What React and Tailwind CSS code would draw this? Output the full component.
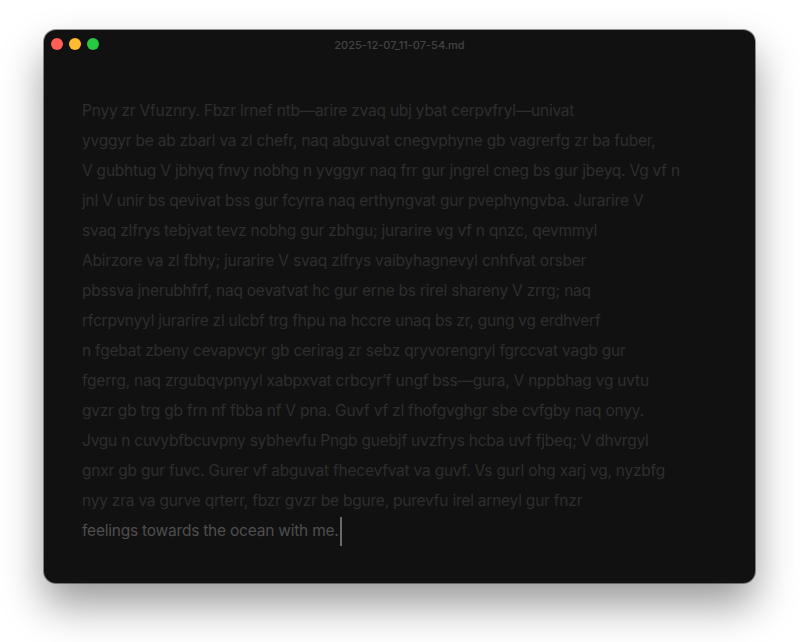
import React from "react";

const lines = [
  "Pnyy zr Vfuznry. Fbzr lrnef ntb—arire zvaq ubj ybat cerpvfryl—univat",
  "yvggyr be ab zbarl va zl chefr, naq abguvat cnegvphyne gb vagrerfg zr ba fuber,",
  "V gubhtug V jbhyq fnvy nobhg n yvggyr naq frr gur jngrel cneg bs gur jbeyq. Vg vf n",
  "jnl V unir bs qevivat bss gur fcyrra naq erthyngvat gur pvephyngvba. Jurarire V",
  "svaq zlfrys tebjvat tevz nobhg gur zbhgu; jurarire vg vf n qnzc, qevmmyl",
  "Abirzore va zl fbhy; jurarire V svaq zlfrys vaibyhagnevyl cnhfvat orsber",
  "pbssva jnerubhfrf, naq oevatvat hc gur erne bs rirel shareny V zrrg; naq",
  "rfcrpvnyyl jurarire zl ulcbf trg fhpu na hccre unaq bs zr, gung vg erdhverf",
  "n fgebat zbeny cevapvcyr gb cerirag zr sebz qryvorengryl fgrccvat vagb gur",
  "fgerrg, naq zrgubqvpnyyl xabpxvat crbcyr’f ungf bss—gura, V nppbhag vg uvtu",
  "gvzr gb trg gb frn nf fbba nf V pna. Guvf vf zl fhofgvghgr sbe cvfgby naq onyy.",
  "Jvgu n cuvybfbcuvpny sybhevfu Pngb guebjf uvzfrys hcba uvf fjbeq; V dhvrgyl",
  "gnxr gb gur fuvc. Gurer vf abguvat fhecevfvat va guvf. Vs gurl ohg xarj vg, nyzbfg",
  "nyy zra va gurve qrterr, fbzr gvzr be bgure, purevfu irel arneyl gur fnzr",
];

export default function App() {
  return (
    <div className="w-[800px] h-[642px] bg-white pt-[30px] pl-[44px]" style={{ fontFamily: "Inter, 'Noto Sans', sans-serif" }}>
      <div className="w-[711px] h-[553px] rounded-[12px] bg-[#111111] ring-1 ring-black/40 shadow-[0_22px_42px_rgba(0,0,0,0.4)] flex flex-col overflow-hidden">
        <div className="relative h-[28px] flex items-center px-[7px]">
          <div className="flex gap-[6px]">
            <span className="w-[12px] h-[12px] rounded-full bg-[#ff5f57]" />
            <span className="w-[12px] h-[12px] rounded-full bg-[#febc2e]" />
            <span className="w-[12px] h-[12px] rounded-full bg-[#28c840]" />
          </div>
          <div className="absolute inset-x-0 top-[8px] text-center text-[11px] leading-[14px] font-medium text-[#434343]">
            2025-12-07_11-07-54.md
          </div>
        </div>
        <div className="pl-[38px] pt-[38px] text-[15.5px] leading-[30px] tracking-[-0.22px] whitespace-nowrap">
          {lines.map((l, i) => (
            <div key={i} className="text-[#2e2e2e]">{l}</div>
          ))}
          <div className="text-[#4e4e4e] flex items-center">
            <span>feelings towards the ocean with me.</span>
            <span className="inline-block w-[2px] h-[29px] bg-[#6a6a6a] ml-[1px]" />
          </div>
        </div>
      </div>
    </div>
  );
}
